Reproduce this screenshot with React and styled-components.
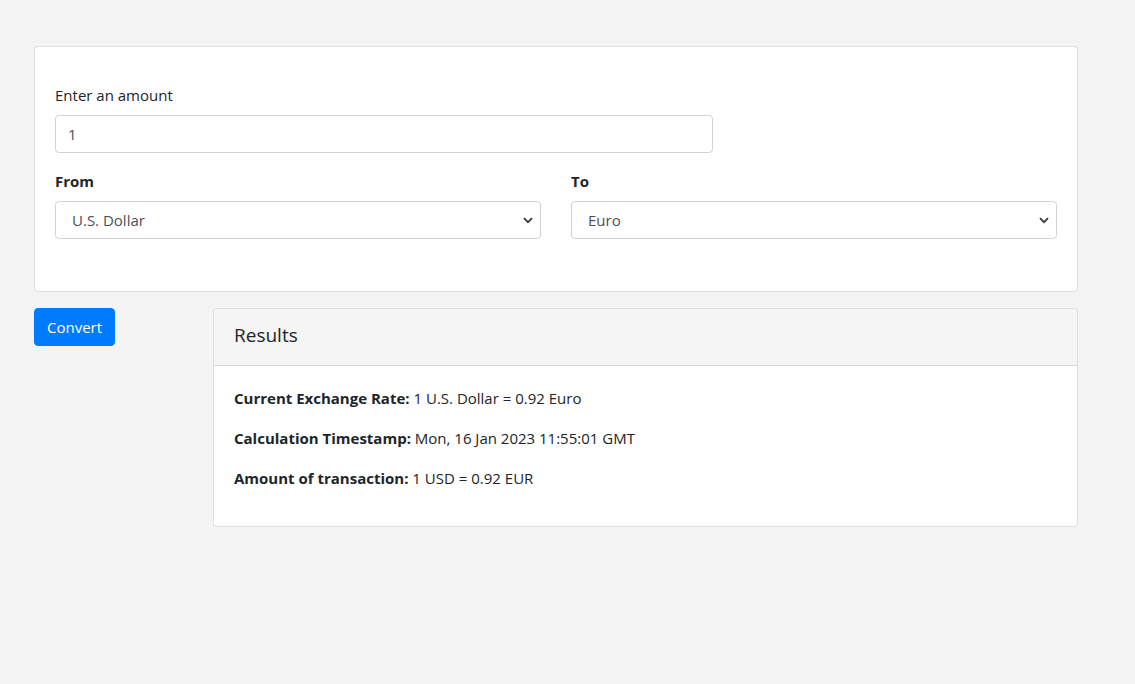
import React from "react";
import styled, { createGlobalStyle } from "styled-components";

const Global = createGlobalStyle`
  html, body { margin: 0; padding: 0; background: #f4f4f4; }
  body {
    font-family: "Open Sans", "Noto Sans", sans-serif;
    font-size: 16px;
    line-height: 1.5;
    color: #212529;
  }
  * { box-sizing: border-box; }
`;

const Page = styled.div`
  padding: 46px 57px 0 34px;
  display: flex;
  flex-direction: column;
  gap: 16px;
`;

const Card = styled.div`
  background: #fff;
  border: 1px solid rgba(0, 0, 0, 0.125);
  border-radius: 4px;
`;

const FormBody = styled.div`
  padding: 36px 20px 52px;
  display: flex;
  flex-direction: column;
  gap: 16px;
`;

const Group = styled.div`
  display: flex;
  flex-direction: column;
  gap: 8px;
  width: ${(p) => p.$width || "auto"};
`;

const SelectRow = styled.div`
  display: grid;
  grid-template-columns: 1fr 1fr;
  column-gap: 30px;
`;

const Label = styled.label`
  font-size: 15px;
  line-height: 24px;
  font-weight: ${(p) => (p.$bold ? 700 : 400)};
`;

const Input = styled.input`
  height: 38px;
  padding: 6px 12px;
  font: inherit;
  font-size: 15px;
  color: #495057;
  border: 1px solid #ced4da;
  border-radius: 4px;
  background: #fff;
  outline: none;
`;

const SelectWrap = styled.div`
  position: relative;
`;

const Select = styled.select`
  width: 100%;
  height: 38px;
  padding: 6px 30px 6px 16px;
  font: inherit;
  font-size: 15px;
  color: #495057;
  border: 1px solid #ced4da;
  border-radius: 4px;
  background: #fff;
  appearance: none;
  -webkit-appearance: none;
  outline: none;
`;

const Chevron = styled.svg`
  position: absolute;
  right: 8px;
  top: 16px;
  pointer-events: none;
`;

const Bottom = styled.div`
  display: grid;
  grid-template-columns: 179px 1fr;
  align-items: start;
`;

const Button = styled.button`
  justify-self: start;
  height: 38px;
  padding: 6px 12px;
  font: inherit;
  font-size: 15px;
  color: #fff;
  background: #007bff;
  border: 1px solid #007bff;
  border-radius: 4px;
  cursor: pointer;
`;

const CardHeader = styled.div`
  background: #f5f5f5;
  border-bottom: 1px solid rgba(0, 0, 0, 0.125);
  padding: 14px 20px 18px;
  border-radius: 4px 4px 0 0;
`;

const Title = styled.h5`
  margin: 0;
  font-size: 19px;
  font-weight: 500;
  line-height: 24px;
`;

const CardBody = styled.div`
  padding: 20px 20px 4px;
`;

const Line = styled.p`
  margin: 0 0 16px;
  font-size: 15px;
  line-height: 24px;
  &:last-child { margin-bottom: 32px; }
`;

const Key = styled.strong`
  font-weight: 700;
`;

function SelectField({ label, value }) {
  return (
    <Group>
      <Label $bold>{label}</Label>
      <SelectWrap>
        <Select defaultValue={value}>
          <option>U.S. Dollar</option>
          <option>Euro</option>
        </Select>
        <Chevron width="10" height="7" viewBox="0 0 10 7">
          <path d="M1 1.2 L5 5.2 L9 1.2" fill="none" stroke="#3a3a3a" strokeWidth="1.8" />
        </Chevron>
      </SelectWrap>
    </Group>
  );
}

export default function App() {
  return (
    <>
      <Global />
      <Page>
        <Card>
          <FormBody>
            <Group $width="658px">
              <Label>Enter an amount</Label>
              <Input defaultValue="1" />
            </Group>
            <SelectRow>
              <SelectField label="From" value="U.S. Dollar" />
              <SelectField label="To" value="Euro" />
            </SelectRow>
          </FormBody>
        </Card>
        <Bottom>
          <Button>Convert</Button>
          <Card>
            <CardHeader>
              <Title>Results</Title>
            </CardHeader>
            <CardBody>
              <Line>
                <Key>Current Exchange Rate:</Key> 1 U.S. Dollar = 0.92 Euro
              </Line>
              <Line>
                <Key>Calculation Timestamp:</Key> Mon, 16 Jan 2023 11:55:01 GMT
              </Line>
              <Line>
                <Key>Amount of transaction:</Key> 1 USD = 0.92 EUR
              </Line>
            </CardBody>
          </Card>
        </Bottom>
      </Page>
    </>
  );
}
